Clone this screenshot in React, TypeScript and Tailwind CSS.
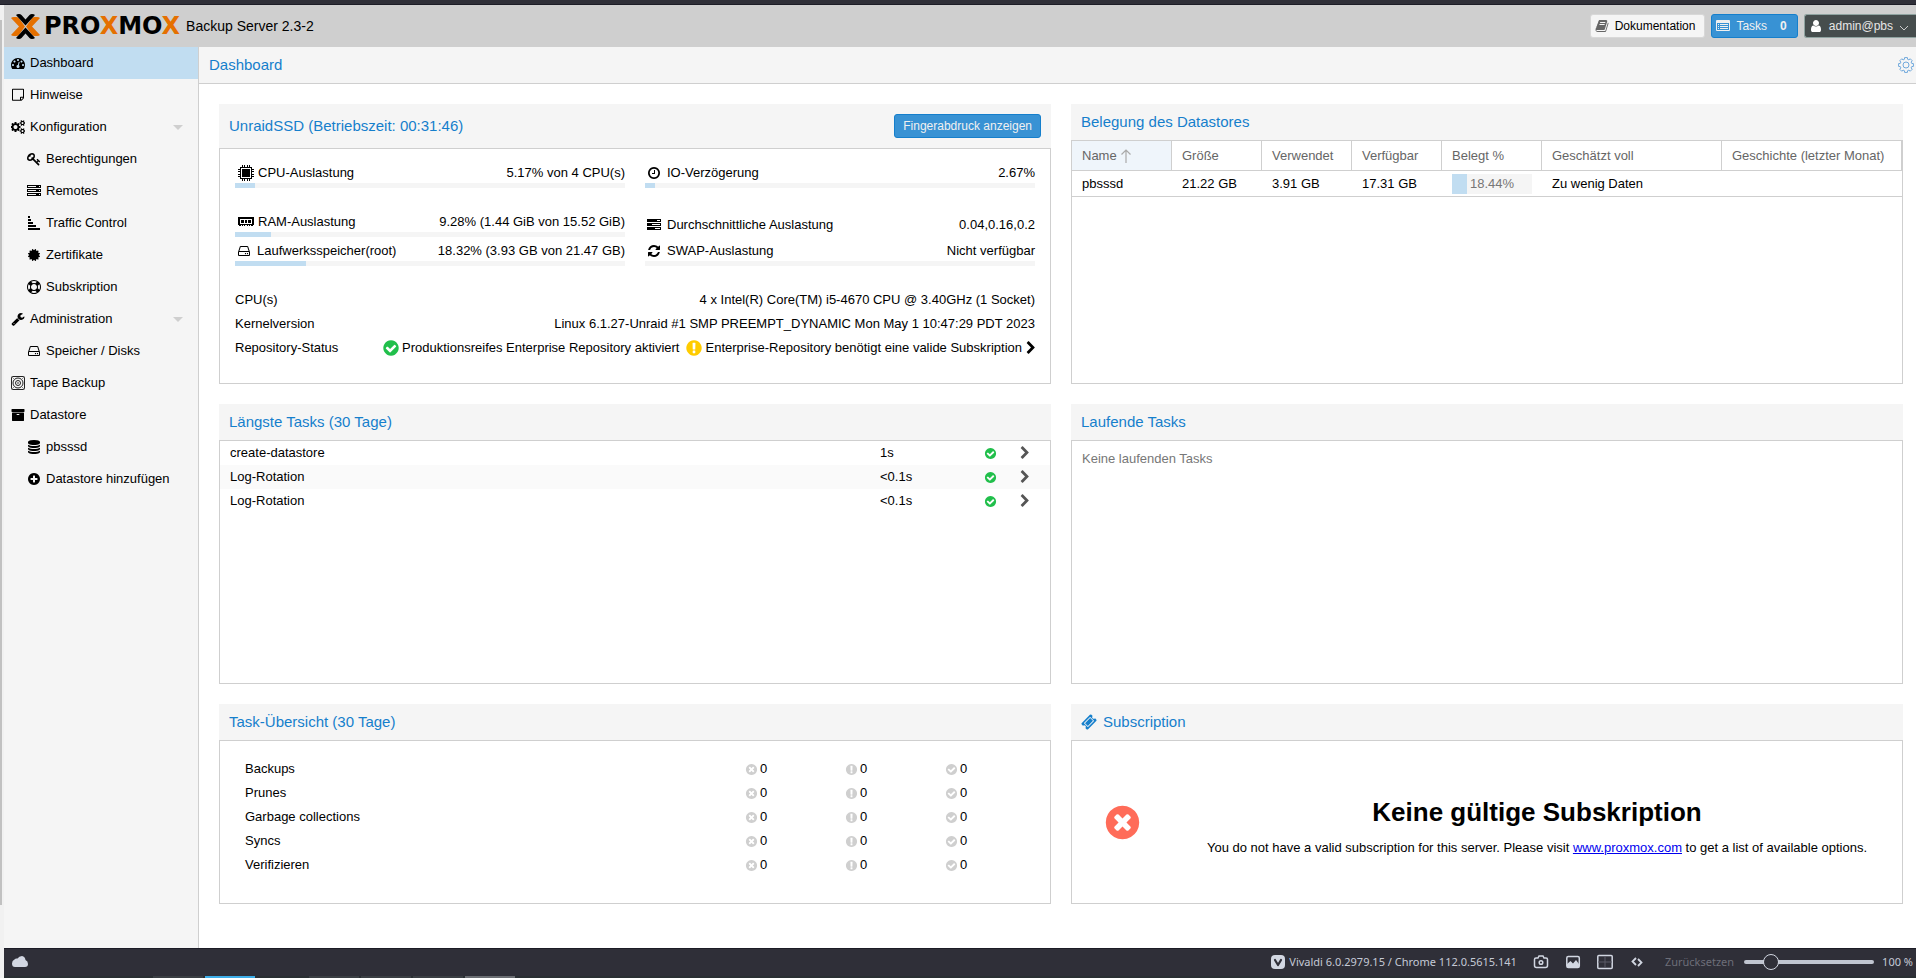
import React, { useState } from 'react';

// outer disc shared by the round status icons
const DISC =
    'q0 209-103 385.500t-279.500 279.500-385.500 103-385.500-103-279.500-279.500-103-385.500 103-385.500 279.500-279.500 385.500-103 385.500 103 279.500 279.500 103 385.500z';

const paths = {
    check: 'M1412 734q0-28-18-46l-91-90q-19-19-45-19t-45 19l-408 407-226-226q-19-19-45-19t-45 19l-91 90q-18 18-18 46 0 27 18 45l362 362q19 19 45 19 27 0 46-19l543-543q18-18 18-45zm252 162' + DISC,
    times: 'M1277 1122q0-26-19-45l-181-181 181-181q19-19 19-45 0-27-19-46l-90-90q-19-19-46-19-26 0-45 19l-181 181-181-181q-19-19-45-19-27 0-46 19l-90 90q-19 19-19 46 0 26 19 45l181 181-181 181q-19 19-19 45 0 27 19 46l90 90q19 19 46 19 26 0 45-19l181-181 181 181q19 19 45 19 27 0 46-19l90-90q19-19 19-46zm387-226' + DISC,
    exclamation: 'M896 128q209 0 385.500 103t279.500 279.500 103 385.500-103 385.500-279.500 279.500-385.500 103-385.500-103-279.500-279.500-103-385.500 103-385.500 279.500-279.500 385.500-103zm128 1247v-190q0-14-9-23.500t-22-9.500h-192q-13 0-23 10t-10 23v190q0 13 10 23t23 10h192q13 0 22-9.500t9-23.500zm-2-344l18-621q0-12-10-18-10-8-24-8h-220q-14 0-24 8-10 6-10 18l17 621q0 10 10 17.500t24 7.500h185q14 0 23.500-7.500t10.500-17.500z',
    plus: 'M1344 960v-128q0-26-19-45t-45-19h-256v-256q0-26-19-45t-45-19h-128q-26 0-45 19t-19 45v256h-256q-26 0-45 19t-19 45v128q0 26 19 45t45 19h256v256q0 26 19 45t45 19h128q26 0 45-19t19-45v-256h256q26 0 45-19t19-45zm320-64' + DISC,
    clock: 'M1024 544v448q0 14-9 23t-23 9h-320q-14 0-23-9t-9-23v-64q0-14 9-23t23-9h224v-352q0-14 9-23t23-9h64q14 0 23 9t9 23zm416 352q0-148-73-273t-198-198-273-73-273 73-198 198-73 273 73 273 198 198 273 73 273-73 198-198 73-273zm224 0' + DISC,
    refresh: 'M1639 1056q0 5-1 7-64 268-268 434.500t-478 166.500q-146 0-282.500-55t-243.500-157l-129 129q-19 19-45 19t-45-19-19-45v-448q0-26 19-45t45-19h448q26 0 45 19t19 45-19 45l-137 137q71 66 161 102t187 36q134 0 250-65t186-179q11-17 53-117 8-23 30-23h192q13 0 22.500 9.500t9.500 22.500zm25-800v448q0 26-19 45t-45 19h-448q-26 0-45-19t-19-45 19-45l138-138q-148-137-349-137-134 0-250 65t-186 179q-11 17-53 117-8 23-30 23h-199q-13 0-22.500-9.500t-9.500-22.500v-7q65-268 270-434.500t480-166.500q146 0 284 55.500t245 156.500l130-129q19-19 45-19t45 19 19 45z',
    chevron: 'M1363 877l-742 742q-19 19-45 19t-45-19l-166-166q-19-19-19-45t19-45l531-531-531-531q-19-19-19-45t19-45l166-166q19-19 45-19t45 19l742 742q19 19 19 45t-19 45z',
    dashboard: 'M384 1152q0-53-37.500-90.500t-90.500-37.500-90.500 37.500-37.500 90.500 37.500 90.500 90.500 37.500 90.500-37.500 37.500-90.500zm192-448q0-53-37.500-90.500t-90.500-37.500-90.500 37.500-37.500 90.500 37.500 90.500 90.500 37.500 90.500-37.500 37.500-90.500zm428 481l101-382q6-26-7.500-48.500t-38.500-29.500-48 6.500-30 39.500l-101 382q-60 5-107 43.500t-63 98.500q-20 77 20 146t117 89 146-20 89-117q16-60-6-117t-72-91zm660-33q0-53-37.500-90.500t-90.500-37.500-90.500 37.500-37.500 90.500 37.500 90.500 90.500 37.500 90.500-37.500 37.500-90.500zm-640-640q0-53-37.500-90.500t-90.500-37.500-90.500 37.500-37.500 90.500 37.500 90.500 90.500 37.500 90.500-37.500 37.500-90.500zm448 192q0-53-37.500-90.500t-90.500-37.500-90.500 37.500-37.500 90.500 37.500 90.500 90.500 37.500 90.500-37.500 37.500-90.500zm320 448q0 261-141 483-19 29-54 29h-1402q-35 0-54-29-141-221-141-483 0-182 71-348t191-286 286-191 348-71 348 71 286 191 191 286 71 348z',
    note: 'M1528 1256h-248v248q29-10 41-22l185-185q12-12 22-41zm-280-128h288v-896h-1280v1280h896v-288q0-40 28-68t68-28zm416-928v1024q0 40-20 88t-48 76l-184 184q-28 28-76 48t-88 20h-1024q-40 0-68-28t-28-68v-1344q0-40 28-68t68-28h1344q40 0 68 28t28 68z',
    cogs: 'M832 896q0-106-75-181t-181-75-181 75-75 181 75 181 181 75 181-75 75-181zm768 512q0-52-38-90t-90-38-90 38-38 90q0 53 37.500 90.500t90.500 37.500 90.500-37.500 37.500-90.500zm0-1024q0-52-38-90t-90-38-90 38-38 90q0 53 37.500 90.500t90.500 37.500 90.500-37.500 37.500-90.500zm-384 421v185q0 10-7 19.500t-16 10.500l-155 24q-11 35-32 76 34 48 90 115 7 11 7 20 0 12-7 19-23 30-82.500 89.500t-78.500 59.500q-11 0-21-7l-115-90q-37 19-77 31-11 108-23 155-7 24-30 24h-186q-11 0-20-7.500t-10-17.500l-23-153q-34-10-75-31l-118 89q-7 7-20 7-11 0-21-8-144-133-144-160 0-9 7-19 10-14 41-53t47-61q-23-44-35-82l-152-24q-10-1-17-9.500t-7-19.500v-185q0-10 7-19.500t16-10.500l155-24q11-35 32-76-34-48-90-115-7-11-7-20 0-12 7-20 22-30 82-89t79-59q11 0 21 7l115 90q34-18 77-32 11-108 23-154 7-24 30-24h186q11 0 20 7.500t10 17.500l23 153q34 10 75 31l118-89q8-7 20-7 11 0 21 8 144 133 144 160 0 8-7 19-12 16-42 54t-45 60q23 48 34 82l152 23q10 2 17 10.500t7 19.500zm640 533v140q0 16-149 31-12 27-30 52 51 113 51 138 0 4-4 7-122 71-124 71-8 0-46-47t-52-68q-20 2-30 2t-30-2q-14 21-52 68t-46 47q-2 0-124-71-4-3-4-7 0-25 51-138-18-25-30-52-149-15-149-31v-140q0-16 149-31 13-29 30-52-51-113-51-138 0-4 4-7 4-2 35-20t59-34 30-16q8 0 46 46.500t52 67.500q20-2 30-2t30 2q51-71 92-112l6-2q4 0 124 70 4 3 4 7 0 25-51 138 17 23 30 52 149 15 149 31zm0-1024v140q0 16-149 31-12 27-30 52 51 113 51 138 0 4-4 7-122 71-124 71-8 0-46-47t-52-68q-20 2-30 2t-30-2q-14 21-52 68t-46 47q-2 0-124-71-4-3-4-7 0-25 51-138-18-25-30-52-149-15-149-31v-140q0-16 149-31 13-29 30-52-51-113-51-138 0-4 4-7 4-2 35-20t59-34 30-16q8 0 46 46.500t52 67.500q20-2 30-2t30 2q51-71 92-112l6-2q4 0 124 70 4 3 4 7 0 25-51 138 17 23 30 52 149 15 149 31z',
    key: 'M832 512q0-80-56-136t-136-56-136 56-56 136q0 42 19 83-41-19-83-19-80 0-136 56t-56 136 56 136 136 56 136-56 56-136q0-42-19-83 41 19 83 19 80 0 136-56t56-136zm851 704q0 17-49 66t-66 49q-9 0-28.500-16t-36.500-33-38.500-40-24.500-26l-96 96 220 220q28 28 28 68 0 42-39 81t-81 39q-40 0-68-28l-671-671q-176 131-365 131-163 0-265.500-102.500t-102.500-265.500q0-160 95-313t248-248 313-95q163 0 265.500 102.500t102.500 265.500q0 189-131 365l355 355 96-96q-3-3-26-24.500t-40-38.500-33-36.500-16-28.500q0-17 49-66t66-49q13 0 23 10 6 6 46 44.500t82 79.500 86.500 86 73 78 28.500 41z',
    certificate: 'M1504 896l138 135q30 28 20 70-12 41-52 51l-188 48 53 186q12 41-19 70-29 31-70 19l-186-53-48 188q-10 40-51 52-12 2-19 2-31 0-51-22l-135-138-135 138q-28 30-70 20-41-11-51-52l-48-188-186 53q-41 12-70-19-31-29-19-70l53-186-188-48q-40-10-52-51-10-42 20-70l138-135-138-135q-30-28-20-70 12-41 52-51l188-48-53-186q-12-41 19-70 29-31 70-19l186 53 48-188q10-41 51-51 41-12 70 19l135 139 135-139q29-30 70-19 41 10 51 51l48 188 186-53q41-12 70 19 31 29 19 70l-53 186 188 48q40 10 52 51 10 42-20 70z',
    support: 'M896 0q182 0 348 71t286 191 191 286 71 348-71 348-191 286-286 191-348 71-348-71-286-191-191-286-71-348 71-348 191-286 286-191 348-71zm0 128q-190 0-361 90l194 194q82-28 167-28t167 28l194-194q-171-90-361-90zm-678 1129l194-194q-28-82-28-167t28-167l-194-194q-90 171-90 361t90 361zm678 407q190 0 361-90l-194-194q-82 28-167 28t-167-28l-194 194q171 90 361 90zm0-384q159 0 271.500-112.500t112.500-271.500-112.500-271.500-271.500-112.500-271.500 112.500-112.500 271.500 112.500 271.500 271.500 112.500zm484-217l194 194q90-171 90-361t-90-361l-194 194q28 82 28 167t-28 167z',
    wrench: 'M448 1472q0-26-19-45t-45-19-45 19-19 45 19 45 45 19 45-19 19-45zm644-420l-682 682q-37 37-90 37-52 0-91-37l-106-108q-38-36-38-90 0-53 38-91l681-681q39 98 114.500 173.500t173.500 114.500zm634-435q0 39-23 106-47 134-164.500 217.500t-258.500 83.500q-185 0-316.500-131.500t-131.500-316.500 131.500-316.500 316.500-131.500q58 0 121.500 16.500t107.500 46.500q16 11 16 28t-16 28l-293 169v224l193 107q5-3 79-48.500t135.500-81 70.500-35.500q15 0 23.500 10t8.500 25z',
    hdd: 'M1168 1216q0 33-23.500 56.500t-56.500 23.500-56.500-23.500-23.500-56.500 23.500-56.500 56.500-23.500 56.500 23.500 23.500 56.500zm256 0q0 33-23.500 56.500t-56.500 23.500-56.500-23.500-23.500-56.500 23.500-56.500 56.500-23.500 56.500 23.500 23.500 56.500zm112 160v-320q0-13-9.500-22.500t-22.500-9.500h-1216q-13 0-22.500 9.500t-9.500 22.500v320q0 13 9.500 22.500t22.500 9.500h1216q13 0 22.500-9.500t9.500-22.500zm-1230-480h1180l-157-482q-4-13-16-21.500t-26-8.500h-782q-14 0-26 8.500t-16 21.500zm1358 160v320q0 66-47 113t-113 47h-1216q-66 0-113-47t-47-113v-320q0-25 16-75l197-606q17-53 63-86t101-33h782q55 0 101 33t63 86l197 606q16 50 16 75z',
    archive: 'M1088 832q0-26-19-45t-45-19h-256q-26 0-45 19t-19 45 19 45 45 19h256q26 0 45-19t19-45zm576-192v960q0 26-19 45t-45 19h-1408q-26 0-45-19t-19-45v-960q0-26 19-45t45-19h1408q26 0 45 19t19 45zm64-448v256q0 26-19 45t-45 19h-1536q-26 0-45-19t-19-45v-256q0-26 19-45t45-19h1536q26 0 45 19t19 45z',
    database: 'M896 768q237 0 443-43t325-127v170q0 69-103 128t-280 93.500-385 34.500-385-34.500-280-93.500-103-128v-170q119 84 325 127t443 43zm0 768q237 0 443-43t325-127v170q0 69-103 128t-280 93.500-385 34.500-385-34.500-280-93.500-103-128v-170q119 84 325 127t443 43zm0-384q237 0 443-43t325-127v170q0 69-103 128t-280 93.500-385 34.500-385-34.500-280-93.500-103-128v-170q119 84 325 127t443 43zm0-1152q208 0 385 34.500t280 93.500 103 128v128q0 69-103 128t-280 93.500-385 34.500-385-34.500-280-93.500-103-128v-128q0-69 103-128t280-93.500 385-34.500z',
    user: 'M1536 1399q0 109-62.500 187t-150.500 78h-854q-88 0-150.500-78t-62.500-187q0-85 8.500-160.500t31.500-152 58.500-131 94-89 134.500-34.500q131 128 313 128t313-128q76 0 134.500 34.500t94 89 58.500 131 31.500 152 8.500 160.500zm-256-887q0 159-112.500 271.500t-271.500 112.500-271.500-112.500-112.500-271.500 112.500-271.500 271.500-112.500 271.500 112.500 112.500 271.500z',
    book: 'M1703 478q40 57 18 129l-275 906q-19 64-76.500 107.500t-122.500 43.500h-923q-77 0-148.500-53.500t-99.500-131.500q-24-67-2-127 0-4 3-27t4-37q1-8-3-21.500t-3-19.500q2-11 8-21t16.500-23.500 16.500-23.500q23-38 45-91.500t30-91.500q3-10 .5-30t-.5-28q3-11 17-28t17-23q21-36 42-92t25-90q1-9-2.500-32t.5-28q4-13 22-30.500t22-22.500q19-26 42.500-84.500t27.500-96.500q1-8-3-25.500t-2-26.500q2-8 9-18t18-23 17-21q8-12 16.500-30.500t15-35 16-36 19.500-32 26.500-23.500 36-11.500 47.500 5.500l-1 3q38-9 51-9h761q74 0 114 56t18 130l-274 906q-36 119-71.500 153.500t-128.500 34.500h-869q-27 0-38 15-11 16-1 43 24 70 144 70h923q29 0 56-15.500t35-41.500l300-987q7-22 5-57 38 15 59 43zm-1064 2q-4 13 2 22.500t20 9.500h608q13 0 25.500-9.500t16.500-22.500l21-64q4-13-2-22.500t-20-9.500h-608q-13 0-25.500 9.500t-16.500 22.500zm-83 256q-4 13 2 22.500t20 9.500h608q13 0 25.500-9.500t16.500-22.500l21-64q4-13-2-22.500t-20-9.500h-608q-13 0-25.500 9.500t-16.500 22.500z',
    ticket: 'M1024 452l316 316-572 572-316-316zm-211 979l618-618q19-19 19-45t-19-45l-362-362q-18-18-45-18t-45 18l-618 618q-19 19-19 45t19 45l362 362q18 18 45 18t45-18zm889-637l-907 908q-37 37-90.500 37t-90.500-37l-126-126q56-56 56-136t-56-136-136-56-136 56l-125-126q-37-37-37-90.500t37-90.500l907-906q37-37 90.500-37t90.500 37l125 125q-56 56-56 136t56 136 136 56 136-56l126 125q37 37 37 90.500t-37 90.500z',
};

type IconName = keyof typeof paths;

const Icon = ({ name, className = 'size-[14px]' }: { name: IconName; className?: string }) => (
    <svg viewBox="0 0 1792 1792" fill="currentColor" aria-hidden="true" className={`shrink-0 ${className}`}>
        <path d={paths[name]} />
    </svg>
);

const ServerIcon = () => (
    <svg viewBox="0 0 14 14" shapeRendering="crispEdges" className="size-[14px] shrink-0" aria-hidden="true">
        {[1, 5, 9].map((y) => (
            <g key={y}>
                <rect x="0" y={y} width="14" height="3" />
                <rect x="1" y={y + 1} width="8" height="1" fill="#f5f5f5" />
                <rect x="12" y={y + 1} width="1" height="1" fill="#f5f5f5" />
            </g>
        ))}
    </svg>
);

const TrafficIcon = () => (
    <svg viewBox="0 0 14 14" shapeRendering="crispEdges" className="size-[14px] shrink-0" aria-hidden="true">
        <path d="M1 0h2v2H1zM1 3h3v2H1zM1 6h5v2H1zM1 9h8v2H1zM1 12h12v2H1z" />
    </svg>
);

const TapeIcon = () => (
    <svg viewBox="0 0 14 14" fill="none" stroke="#222" strokeWidth="1" className="size-[14px] shrink-0" aria-hidden="true">
        <rect x="0.500" y="0.500" width="13" height="13" rx="1" />
        <circle cx="7" cy="7" r="5" />
        <circle cx="7" cy="7" r="2.500" />
        <circle cx="7" cy="7" r="0.800" fill="#222" stroke="none" />
        <path d="M1.500 1.500l1 1M12.500 1.500l-1 1M1.500 12.500l1-1M12.500 12.500l-1-1" />
    </svg>
);

const TasksIcon = () => (
    <svg viewBox="0 0 14 14" shapeRendering="crispEdges" className="size-[14px] shrink-0" aria-hidden="true">
        <path d="M0 1h14v3H0zM0 5h14v3H0zM0 9h14v3H0z" />
        <path d="M10 2h3v1h-3zM5 6h8v1H5zM8 10h5v1H8z" fill="#fff" />
    </svg>
);

const CpuIcon = () => (
    <svg viewBox="0 0 16 16" shapeRendering="crispEdges" className="size-4 shrink-0" aria-hidden="true">
        <path d="M4 0h1v16H4zM6 0h1v16H6zM9 0h1v16H9zM11 0h1v16h-1zM0 4h16v1H0zM0 6h16v1H0zM0 9h16v1H0zM0 11h16v1H0z" />
        <rect x="2" y="2" width="12" height="12" />
        <rect x="3" y="3" width="10" height="10" fill="#fff" />
        <rect x="4" y="4" width="8" height="8" />
    </svg>
);

const RamIcon = () => (
    <svg viewBox="0 0 16 16" shapeRendering="crispEdges" className="size-4 shrink-0" aria-hidden="true">
        <path d="M0 3h16v8H0z" />
        <path d="M2 5h12v5H2z" fill="#fff" />
        <path d="M3 6h3v3H3zM7 6h2v3H7zM10 6h3v3h-3zM1 11h2v1H1zM4 11h1v1H4zM6 11h1v1H6zM9 11h1v1H9zM11 11h1v1h-1zM13 11h2v1h-2z" />
    </svg>
);

const ListIcon = () => (
    <svg viewBox="0 0 14 14" fill="currentColor" fillRule="evenodd" className="size-[14px] shrink-0" aria-hidden="true">
        <path d="M1 1h12q1 0 1 1v9q0 1-1 1H1q-1 0-1-1V2q0-1 1-1zM1 4v7h12V4zM2 5h1v1H2zM4 5h8v1H4zM2 7h1v1H2zM4 7h8v1H4zM2 9h1v1H2zM4 9h8v1H4z" />
    </svg>
);

const GearIcon = () => (
    <svg viewBox="0 0 16 16" fill="none" stroke="#6fa8dc" strokeLinejoin="round" className="size-4" aria-hidden="true">
        <path d="M6.400 2.300L6.600 .6H9.400L9.600 2.300L10.900 2.840L12.240 1.780L14.220 3.760L13.160 5.100L13.700 6.400L15.400 6.600V9.400L13.700 9.600L13.160 10.900L14.220 12.240L12.240 14.220L10.900 13.160L9.600 13.700L9.400 15.400H6.600L6.400 13.700L5.100 13.160L3.760 14.220L1.780 12.240L2.840 10.900L2.300 9.600L.6 9.400V6.600L2.300 6.400L2.840 5.100L1.780 3.760L3.760 1.780L5.100 2.840z" />
        <circle cx="8" cy="8" r="3" />
    </svg>
);

const SortIcon = () => (
    <svg viewBox="0 0 10 14" fill="none" stroke="#aaa" strokeWidth="1.200" className="ml-[2px] h-[14px] w-[10px]" aria-hidden="true">
        <path d="M5 14V1M.5 5.500L5 1l4.500 4.500" />
    </svg>
);

const Logo = () => (
    <div className="flex items-center gap-1">
        <svg viewBox="0 0 29 25" className="h-[25px] w-[29px]" aria-hidden="true">
            <g fill="#e57000">
                <path d="M0 4Q1 3 3 3H5Q7 3 8 4.200L14 12.500 8 20.800Q7 22 5 22H3Q1 22 0 21L8 12.500z" />
                <path d="M29 4Q28 3 26 3H24Q22 3 21 4.200L15 12.500 21 20.800Q22 22 24 22H26Q28 22 29 21L21 12.500z" />
            </g>
            <path d="M5 1Q6 0 8 0Q9.500 0 10.500 1L14.500 5.500 18.500 1Q19.500 0 21 0Q23 0 24 1L14.500 11.600z" />
            <path d="M5 24Q6 25 8 25Q9.500 25 10.500 24L14.500 19.500 18.500 24Q19.500 25 21 25Q23 25 24 24L14.500 13.400z" />
        </svg>
        <span className="font-['DejaVu_Sans',sans-serif] text-[24px] leading-6 font-bold">
            PRO<span className="text-[#e57000]">X</span>MO<span className="text-[#e57000]">X</span>
        </span>
    </div>
);

const navItems = [
    { label: 'Dashboard', icon: <Icon name="dashboard" /> },
    { label: 'Hinweise', icon: <Icon name="note" /> },
    { label: 'Konfiguration', icon: <Icon name="cogs" />, group: true },
    { label: 'Berechtigungen', icon: <Icon name="key" />, sub: true },
    { label: 'Remotes', icon: <ServerIcon />, sub: true },
    { label: 'Traffic Control', icon: <TrafficIcon />, sub: true },
    { label: 'Zertifikate', icon: <Icon name="certificate" />, sub: true },
    { label: 'Subskription', icon: <Icon name="support" />, sub: true },
    { label: 'Administration', icon: <Icon name="wrench" />, group: true },
    { label: 'Speicher / Disks', icon: <Icon name="hdd" />, sub: true },
    { label: 'Tape Backup', icon: <TapeIcon /> },
    { label: 'Datastore', icon: <Icon name="archive" /> },
    { label: 'pbsssd', icon: <Icon name="database" />, sub: true },
    { label: 'Datastore hinzufügen', icon: <Icon name="plus" />, sub: true },
];

const longestTasks = [
    { name: 'create-datastore', duration: '1s' },
    { name: 'Log-Rotation', duration: '<0.1s' },
    { name: 'Log-Rotation', duration: '<0.1s' },
];

const summary = ['Backups', 'Prunes', 'Garbage collections', 'Syncs', 'Verifizieren'];

const columns = ['Name', 'Größe', 'Verwendet', 'Verfügbar', 'Belegt %', 'Geschätzt voll', 'Geschichte (letzter Monat)'];

interface PanelProps {
    title: React.ReactNode;
    action?: React.ReactNode;
    className?: string;
    children?: React.ReactNode;
}

const Panel = ({ title, action, className = 'h-[280px]', children }: PanelProps) => (
    <section className={`flex min-w-0 flex-col ${className}`}>
        <header className="flex min-h-9 shrink-0 items-center justify-between bg-[#f5f5f5] px-[10px]">
            <h2 className="flex items-center gap-[6px] text-[15px] leading-5 text-[#157fcc]">{title}</h2>
            {action}
        </header>
        <div className="flex-1 border border-[#cfcfcf] bg-white">{children}</div>
    </section>
);

interface MeterProps {
    icon: React.ReactNode;
    label: string;
    value: string;
    percent?: number;
}

const Meter = ({ icon, label, value, percent }: MeterProps) => (
    <div className={`flex h-6 flex-col gap-[2px] ${percent === undefined ? 'justify-center' : 'justify-end'}`}>
        <div className="flex h-4 items-center justify-between">
            <span className="flex items-center gap-1">
                {icon}
                {label}
            </span>
            <span>{value}</span>
        </div>
        {percent !== undefined && (
            <div className="h-[5px] bg-[#f5f5f5]">
                <div className="h-full bg-[#c1ddf1]" style={{ width: `${percent}%` }} />
            </div>
        )}
    </div>
);

const TopBar = () => (
    <header className="flex h-[42px] shrink-0 items-center justify-between bg-[#cfcfcf] pl-[7px]">
        <div className="flex items-center gap-[6px]">
            <Logo />
            <span className="text-[14px] leading-5">Backup Server 2.3-2</span>
        </div>
        <div className="flex h-6 gap-[6px] text-[12px] leading-4">
            <button className="flex items-center gap-[6px] rounded-[3px] border border-[#d8d8d8] bg-[#f5f5f5] pr-[9px] pl-1">
                <Icon name="book" className="size-[14px] text-[#666]" />
                Dokumentation
            </button>
            <button className="flex items-center gap-[6px] rounded-[3px] border border-[#157fcc] bg-[#3892d4] pr-[10px] pl-1 text-[#f0f0f0]">
                <ListIcon />
                Tasks
                <b className="pl-[7px]">0</b>
            </button>
            <button className="flex items-center gap-[6px] rounded-l-[3px] border border-r-0 border-[#8fa3a0] bg-[#464d4d] pr-[7px] pl-1 text-[#e6e6e6]">
                <Icon name="user" className="size-[14px] text-white" />
                admin@pbs
                <svg viewBox="0 0 10 6" fill="none" stroke="#ccc" className="mt-1 h-[6px] w-[10px]" aria-hidden="true">
                    <path d="M1 1l4 4 4-4" />
                </svg>
            </button>
        </div>
    </header>
);

const Sidebar = () => {
    const [active, setActive] = useState('Dashboard');

    return (
        <nav className="w-[195px] shrink-0 border-r border-[#cfcfcf] bg-[#f5f5f5]">
            {navItems.map((item) => (
                <button
                    key={item.label}
                    onClick={() => setActive(item.label)}
                    className={`flex h-8 w-full items-center gap-[5px] pr-[15px] text-left ${item.sub ? 'pl-[23px]' : 'pl-[7px]'} ${active === item.label ? 'bg-[#c1ddf1]' : ''}`}
                >
                    {item.icon}
                    <span className="flex-1">{item.label}</span>
                    {item.group && (
                        <svg viewBox="0 0 10 5" className="h-[5px] w-[10px] fill-[#cfcfcf]" aria-hidden="true">
                            <path d="M0 0h10L5 5z" />
                        </svg>
                    )}
                </button>
            ))}
        </nav>
    );
};

const ServerPanel = () => (
    <Panel
        title="UnraidSSD (Betriebszeit: 00:31:46)"
        action={
            <button className="my-[10px] h-6 rounded-[3px] border border-[#157fcc] bg-[#3892d4] px-2 text-[12px] leading-4 text-[#f0f0f0]">
                Fingerabdruck anzeigen
            </button>
        }
    >
        <div className="px-[15px] pt-[15px]">
            <div className="grid grid-cols-2 gap-x-5">
                <Meter icon={<span className="pl-[3px]"><CpuIcon /></span>} label="CPU-Auslastung" value="5.17% von 4 CPU(s)" percent={5.17} />
                <Meter icon={<span className="px-[2px]"><Icon name="clock" /></span>} label="IO-Verzögerung" value="2.67%" percent={2.67} />
                <div className="mt-[25px]">
                    <Meter icon={<span className="pl-[3px]"><RamIcon /></span>} label="RAM-Auslastung" value="9.28% (1.44 GiB von 15.52 GiB)" percent={9.28} />
                </div>
                <div className="mt-[25px]">
                    <Meter icon={<span className="px-[2px]"><TasksIcon /></span>} label="Durchschnittliche Auslastung" value="0.04,0.16,0.2" />
                </div>
                <div className="mt-[5px]">
                    <Meter icon={<span className="px-[2px]"><Icon name="hdd" /></span>} label="Laufwerksspeicher(root)" value="18.32% (3.93 GB von 21.47 GB)" percent={18.32} />
                </div>
                <div className="mt-[5px]">
                    <Meter icon={<span className="px-[2px]"><Icon name="refresh" /></span>} label="SWAP-Auslastung" value="Nicht verfügbar" percent={0} />
                </div>
            </div>
            <dl className="mt-[22px] leading-6">
                <div className="flex justify-between">
                    <dt>CPU(s)</dt>
                    <dd>4 x Intel(R) Core(TM) i5-4670 CPU @ 3.40GHz (1 Socket)</dd>
                </div>
                <div className="flex justify-between">
                    <dt>Kernelversion</dt>
                    <dd>Linux 6.1.27-Unraid #1 SMP PREEMPT_DYNAMIC Mon May 1 10:47:29 PDT 2023</dd>
                </div>
                <div className="flex justify-between">
                    <dt>Repository-Status</dt>
                    <dd className="flex items-center gap-[2px]">
                        <Icon name="check" className="size-[18px] text-[#21bf4b]" />
                        <span className="pr-1">Produktionsreifes Enterprise Repository aktiviert</span>
                        <Icon name="exclamation" className="size-[18px] text-[#fc0]" />
                        Enterprise-Repository benötigt eine valide Subskription
                        <Icon name="chevron" className="-mr-[3px] size-[14px]" />
                    </dd>
                </div>
            </dl>
        </div>
    </Panel>
);

const DatastorePanel = () => (
    <Panel title="Belegung des Datastores">
        <table className="w-full table-fixed border-separate border-spacing-0 text-left">
            <colgroup>
                <col className="w-[100px]" />
                <col className="w-[90px]" />
                <col className="w-[90px]" />
                <col className="w-[90px]" />
                <col className="w-[100px]" />
                <col className="w-[180px]" />
                <col />
            </colgroup>
            <thead>
                <tr className="text-[#666]">
                    {columns.map((column, i) => (
                        <th key={column} className={`h-[30px] border-r border-b border-[#cfcfcf] px-[10px] font-normal whitespace-nowrap ${i === 0 ? 'bg-[#eff5fb]' : ''}`}>
                            <span className="flex items-center gap-[2px]">
                                {column}
                                {i === 0 && <SortIcon />}
                            </span>
                        </th>
                    ))}
                </tr>
            </thead>
            <tbody>
                <tr className="*:h-[26px] *:border-b *:border-[#cfcfcf] *:px-[10px]">
                    <td>pbsssd</td>
                    <td>21.22 GB</td>
                    <td>3.91 GB</td>
                    <td>17.31 GB</td>
                    <td>
                        <div className="relative h-5 bg-[#f5f5f5] text-center leading-5 text-[#777]">
                            <div className="absolute inset-y-0 left-0 bg-[#c1ddf1]" style={{ width: '18.44%' }} />
                            18.44%
                        </div>
                    </td>
                    <td>Zu wenig Daten</td>
                    <td />
                </tr>
            </tbody>
        </table>
    </Panel>
);

const LongestTasksPanel = () => (
    <Panel title="Längste Tasks (30 Tage)">
        <table className="w-full table-fixed">
            <tbody>
                {longestTasks.map((task, i) => (
                    <tr key={i} className="h-6 even:bg-[#fafafa]">
                        <td className="px-[10px]">{task.name}</td>
                        <td className="w-[100px] px-[10px]">{task.duration}</td>
                        <td className="w-10">
                            <Icon name="check" className="mx-auto size-[13px] text-[#21bf4b]" />
                        </td>
                        <td className="w-10">
                            <button aria-label="Task öffnen" className="flex w-full justify-center pr-[10px]">
                                <Icon name="chevron" className="size-[14px] text-[#555]" />
                            </button>
                        </td>
                    </tr>
                ))}
            </tbody>
        </table>
    </Panel>
);

const SummaryPanel = () => (
    <Panel title="Task-Übersicht (30 Tage)" className="h-[200px]">
        <div className="px-[25px] pt-4">
            <table className="w-full table-fixed">
                <tbody>
                    {summary.map((name) => (
                        <tr key={name} className="h-6">
                            <td>{name}</td>
                            {(['times', 'exclamation', 'check'] as IconName[]).map((icon) => (
                                <td key={icon} className="w-[100px] last:w-20">
                                    <span className="flex items-center gap-[2px]">
                                        <Icon name={icon} className="size-[13px] text-[#cfcfcf]" />0
                                    </span>
                                </td>
                            ))}
                        </tr>
                    ))}
                </tbody>
            </table>
        </div>
    </Panel>
);

const SubscriptionPanel = () => (
    <Panel
        title={
            <>
                <Icon name="ticket" className="size-4" />
                Subscription
            </>
        }
        className="h-[200px]"
    >
        <div className="flex h-full items-center">
            <div className="flex w-[100px] shrink-0 justify-center">
                <Icon name="times" className="size-[39px] text-[#ff6c59]" />
            </div>
            <div className="flex-1 pt-2 text-center">
                <h3 className="text-[26px] leading-8 font-bold">Keine gültige Subskription</h3>
                <p className="mt-3 leading-4">
                    You do not have a valid subscription for this server. Please visit{' '}
                    <a href="https://www.proxmox.com" className="text-[#0000ee] underline">www.proxmox.com</a>{' '}
                    to get a list of available options.
                </p>
            </div>
        </div>
    </Panel>
);

const StatusBar = () => (
    <footer className="ml-1 flex h-7 shrink-0 items-center justify-between border-t border-[#1c1c26] bg-[#2f2f38] pr-[3px] pb-[2px] pl-2 font-['Noto_Sans',sans-serif] text-[11px] text-[#c5cad6]">
        <svg viewBox="0 0 16 11" fill="#d2d7e2" className="h-[11px] w-4" aria-label="Sync">
            <path d="M3 11Q0 11 0 7.500Q0 4.500 2.500 3.500Q3.500 2 5.500 2.500Q7 0 10 0Q13 .5 13.500 4Q16 5 16 8Q16 11 13 11z" />
        </svg>
        <div className="flex items-center">
            <span className="flex items-center gap-1">
                <svg viewBox="0 0 14 14" className="size-[14px]" aria-hidden="true">
                    <rect width="14" height="14" rx="4" fill="#d2d7e2" />
                    <path d="M4 5l3 5 3-5" fill="none" stroke="#2f2f38" strokeWidth="2.200" strokeLinecap="round" strokeLinejoin="round" />
                </svg>
                Vivaldi 6.0.2979.15 / Chrome 112.0.5615.141
            </span>
            <div className="ml-4 flex items-center gap-4">
                <button aria-label="Bildschirmfoto">
                    <svg viewBox="0 0 16 16" fill="none" stroke="#d2d7e2" strokeWidth="1.500" className="size-4" aria-hidden="true">
                        <path d="M3 4h2l1-2h4l1 2h2q1.500 0 1.500 1.500v6q0 2-2 2h-9q-2 0-2-2v-6Q1.500 4 3 4z" />
                        <circle cx="8" cy="8.500" r="1.800" />
                    </svg>
                </button>
                <button aria-label="Bilder">
                    <svg viewBox="0 0 16 16" fill="none" stroke="#d2d7e2" strokeWidth="1.500" className="size-4" aria-hidden="true">
                        <rect x="1.800" y="2.500" width="12.500" height="11" rx="1.500" />
                        <path d="M2 13V10l3.500-3 2.500 2.500L11 6l3 4v3z" fill="#d2d7e2" stroke="none" />
                    </svg>
                </button>
                <button aria-label="Kacheln">
                    <svg viewBox="0 0 16 16" fill="none" stroke="#d2d7e2" className="size-4" aria-hidden="true">
                        <rect x=".8" y="1.500" width="14.400" height="13" rx="1" strokeWidth="1.500" />
                        <path d="M8 2v12M1 8h14" stroke="#5a5b66" />
                    </svg>
                </button>
                <button aria-label="Seitenaktionen">
                    <svg viewBox="0 0 16 16" fill="none" stroke="#d2d7e2" strokeWidth="1.800" className="size-4" aria-hidden="true">
                        <path d="M7 4L3.500 7.500 7 11M9 5l3.500 3.500L9 12" />
                    </svg>
                </button>
            </div>
            <button className="ml-5 text-[#6d6e78]">Zurücksetzen</button>
            <input
                type="range"
                aria-label="Zoom"
                min={20}
                max={500}
                defaultValue={100}
                className="mr-2 ml-[10px] h-1 w-[130px] appearance-none rounded-sm bg-[#c0c5d0] [&::-webkit-slider-thumb]:size-4 [&::-webkit-slider-thumb]:appearance-none [&::-webkit-slider-thumb]:rounded-full [&::-webkit-slider-thumb]:border [&::-webkit-slider-thumb]:border-[#d2d7e2] [&::-webkit-slider-thumb]:bg-[#2f2f38]"
            />
            <span>100 %</span>
        </div>
    </footer>
);

export default function App() {
    return (
        <div className="flex min-h-screen flex-col bg-[#f1f1f1] font-['Liberation_Sans',Arial,sans-serif] text-[13px] leading-4 text-black">
            <div className="h-[5px] shrink-0 border-b border-[#1c1c26] bg-[#2f2f38]" />
            <div className="flex flex-1">
                {/* collapsed browser panel */}
                <div className="w-1 shrink-0 pt-[15px] pb-[43px]">
                    <div className="h-full w-[2px] bg-[#c1c1c1]" />
                </div>
                <div className="flex min-w-0 flex-1 flex-col">
                    <TopBar />
                    <div className="flex flex-1">
                        <Sidebar />
                        <main className="min-w-0 flex-1 bg-white">
                            <div className="flex h-[37px] items-center justify-between border-b border-[#cfcfcf] bg-[#f5f5f5] pr-[2px] pl-[10px]">
                                <h1 className="text-[15px] leading-5 text-[#157fcc]">Dashboard</h1>
                                <button aria-label="Einstellungen">
                                    <GearIcon />
                                </button>
                            </div>
                            <div className="grid grid-cols-2 gap-5 py-5 pr-[13px] pl-5">
                                <ServerPanel />
                                <DatastorePanel />
                                <LongestTasksPanel />
                                <Panel title="Laufende Tasks">
                                    <p className="p-[10px] text-[#777]">Keine laufenden Tasks</p>
                                </Panel>
                                <SummaryPanel />
                                <SubscriptionPanel />
                            </div>
                        </main>
                    </div>
                </div>
            </div>
            <StatusBar />
            {/* upper edge of the desktop task bar */}
            <div className="ml-1 flex h-[2px] shrink-0 gap-[2px] bg-[#2a2f33] pl-[149px]">
                <div className="w-[50px] bg-[#3b3f44]" />
                <div className="w-[50px] bg-[#3daee9]" />
                <div className="w-[50px]" />
                <div className="w-[50px] bg-[#3b3f44]" />
                <div className="w-[50px] bg-[#3b3f44]" />
                <div className="w-[50px] bg-[#3b3f44]" />
                <div className="w-[50px] bg-[#6b6e73]" />
            </div>
        </div>
    );
}
